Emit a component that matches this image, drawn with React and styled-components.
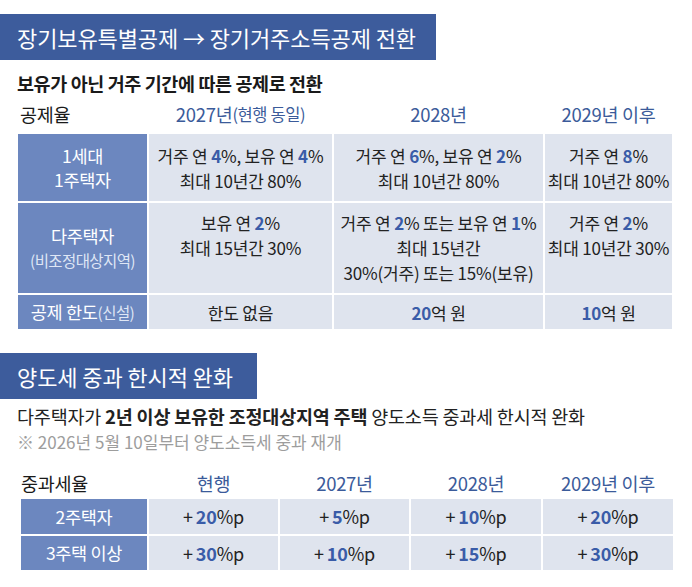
import React from "react";
import styled, { createGlobalStyle } from "styled-components";

const GlobalStyle = createGlobalStyle`
  body {
    margin: 0;
    background: #ffffff;
    font-family: "Noto Sans CJK KR", "Noto Sans", sans-serif;
    color: #222;
  }
`;

const Page = styled.div`
  width: 692px;
  height: 587px;
  padding-top: 14px;
  box-sizing: border-box;
  overflow: hidden;
`;

const TitleBar = styled.div`
  width: ${(p) => p.$width}px;
  height: 46px;
  box-sizing: border-box;
  padding-left: 17px;
  margin-top: ${(p) => p.$top || 0}px;
  background: #3d5c9c;
  color: #fff;
  font-size: 22px;
  letter-spacing: -0.1px;
  display: flex;
  align-items: center;
`;

const Subtitle = styled.div`
  margin: 10px 0 0 17px;
  font-size: 18.5px;
  font-weight: 700;
  letter-spacing: -0.4px;
  line-height: 26px;
  color: #1a1a1a;
`;

const Lead = styled.div`
  margin: 4px 0 0 17px;
  font-size: 18.5px;
  letter-spacing: -0.2px;
  line-height: 26px;
  color: #222;

  b {
    font-weight: 700;
  }
`;

const Note = styled.div`
  margin-left: 17px;
  font-size: 17px;
  letter-spacing: 0;
  line-height: 26px;
  color: #9d9d9d;
`;

const Grid = styled.div`
  display: grid;
  grid-template-columns: ${(p) => p.$cols};
  grid-template-rows: ${(p) => p.$rows};
  gap: 2px;
  margin: ${(p) => p.$margin};
`;

const HeadCell = styled.div`
  display: flex;
  align-items: center;
  justify-content: ${(p) => (p.$left ? "flex-start" : "center")};
  padding: ${(p) => p.$pad};
  font-size: 18.5px;
  letter-spacing: -0.3px;
  color: ${(p) => (p.$left ? "#1a1a1a" : "#3b5b9a")};
  white-space: nowrap;

  small {
    font-size: 16.5px;
    letter-spacing: -0.4px;
  }
`;

const RowHead = styled.div`
  background: #6c87bf;
  color: #fff;
  display: flex;
  flex-direction: column;
  align-items: center;
  justify-content: center;
  text-align: center;
  font-size: 17.5px;
  letter-spacing: -0.3px;
  line-height: 24px;
  white-space: nowrap;

  small {
    font-size: 15.5px;
    color: #dfe6f5;
    letter-spacing: -0.6px;
  }
`;

const Cell = styled.div`
  background: #dfe4ee;
  display: flex;
  flex-direction: column;
  align-items: center;
  justify-content: ${(p) => (p.$top ? "flex-start" : "center")};
  padding-top: ${(p) => (p.$top ? "7px" : "0")};
  text-align: center;
  font-size: ${(p) => p.$size || 17}px;
  letter-spacing: -0.2px;
  line-height: 25px;
  color: #222;
  white-space: nowrap;
`;

const Num = styled.b`
  color: #3a5ca8;
  font-weight: 700;
`;

const Plus = styled.span`
  margin-right: 3px;
`;

function RateTable() {
  return (
    <Grid $cols="129px 183px 209px 127px" $rows="32px 67px 90px 34px" $margin="4px 0 0 18px">
      <HeadCell $left $pad="0 0 4px 2px">공제율</HeadCell>
      <HeadCell $pad="0 0 4px 0">
        2027년<small>(현행 동일)</small>
      </HeadCell>
      <HeadCell $pad="0 0 4px 0">2028년</HeadCell>
      <HeadCell $pad="0 0 4px 0">2029년 이후</HeadCell>

      <RowHead>
        <span>1세대</span>
        <span>1주택자</span>
      </RowHead>
      <Cell>
        <span>거주 연 <Num>4</Num>%, 보유 연 <Num>4</Num>%</span>
        <span>최대 10년간 80%</span>
      </Cell>
      <Cell>
        <span>거주 연 <Num>6</Num>%, 보유 연 <Num>2</Num>%</span>
        <span>최대 10년간 80%</span>
      </Cell>
      <Cell>
        <span>거주 연 <Num>8</Num>%</span>
        <span>최대 10년간 80%</span>
      </Cell>

      <RowHead>
        <span>다주택자</span>
        <small>(비조정대상지역)</small>
      </RowHead>
      <Cell $top>
        <span>보유 연 <Num>2</Num>%</span>
        <span>최대 15년간 30%</span>
      </Cell>
      <Cell $top>
        <span>거주 연 <Num>2</Num>% 또는 보유 연 <Num>1</Num>%</span>
        <span>최대 15년간</span>
        <span>30%(거주) 또는 15%(보유)</span>
      </Cell>
      <Cell $top>
        <span>거주 연 <Num>2</Num>%</span>
        <span>최대 10년간 30%</span>
      </Cell>

      <RowHead>
        <span>
          공제 한도<small>(신설)</small>
        </span>
      </RowHead>
      <Cell>한도 없음</Cell>
      <Cell>
        <span><Num>20</Num>억 원</span>
      </Cell>
      <Cell>
        <span><Num>10</Num>억 원</span>
      </Cell>
    </Grid>
  );
}

const surtax = [
  { label: "2주택자", values: ["20", "5", "10", "20"] },
  { label: "3주택 이상", values: ["30", "10", "15", "30"] },
];

function SurtaxTable() {
  return (
    <Grid $cols="126px 129px 129px 130px 130px" $rows="32px 35px 34px" $margin="10px 0 0 21px">
      <HeadCell $left $pad="4px 0 0 0">중과세율</HeadCell>
      {["현행", "2027년", "2028년", "2029년 이후"].map((h) => (
        <HeadCell key={h} $pad="4px 0 0 0">
          {h}
        </HeadCell>
      ))}
      {surtax.map((row) => (
        <React.Fragment key={row.label}>
          <RowHead>{row.label}</RowHead>
          {row.values.map((v, i) => (
            <Cell key={i} $size={18}>
              <span>
                <Plus>+</Plus>
                <Num>{v}</Num>%p
              </span>
            </Cell>
          ))}
        </React.Fragment>
      ))}
    </Grid>
  );
}

export default function App() {
  return (
    <>
      <GlobalStyle />
      <Page>
        <TitleBar $width={436}>장기보유특별공제 → 장기거주소득공제 전환</TitleBar>
        <Subtitle>보유가 아닌 거주 기간에 따른 공제로 전환</Subtitle>
        <RateTable />

        <TitleBar $width={257} $top={24}>
          양도세 중과 한시적 완화
        </TitleBar>
        <Lead>
          다주택자가 <b>2년 이상 보유한 조정대상지역 주택</b> 양도소득 중과세 한시적 완화
        </Lead>
        <Note>※ 2026년 5월 10일부터 양도소득세 중과 재개</Note>
        <SurtaxTable />
      </Page>
    </>
  );
}
